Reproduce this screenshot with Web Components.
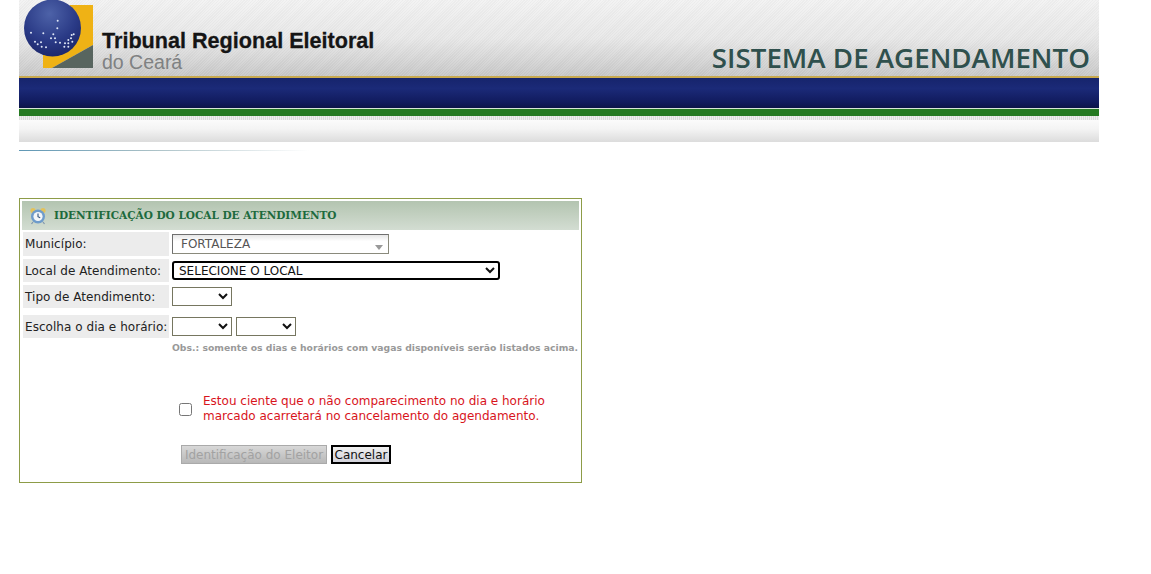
<!DOCTYPE html>
<html lang="pt-BR">
<head>
<meta charset="utf-8">
<title>Sistema de Agendamento</title>
<style>
  html, body { background: #fff; }
  body {
    margin: 0;
    padding-left: 19px;
    font-family: "DejaVu Sans", Verdana, sans-serif;
  }
  tre-header { margin-bottom: 47px; }
  select {
    box-sizing: border-box;
    height: 19px;
    margin: 0;
    padding: 0;
    font: 12px "DejaVu Sans", sans-serif;
    color: #111;
    background: #fff;
    border: 1px solid #767660;
    border-radius: 0;
  }
  select.small { width: 60px; }
  select.focus {
    width: 328px;
    height: 19px;
    padding-left: 1px;
    border: 2px solid #000;
    border-radius: 3px;
  }
  .obs {
    margin: 4px 0 0 149px;
    font: bold 9.25px "DejaVu Sans", sans-serif;
    color: #999;
    white-space: nowrap;
  }
  .actions { display: flex; gap: 4px; margin: 21px 0 0 158px; }
  button {
    box-sizing: border-box;
    height: 19px;
    padding: 0 1px;
    font: 12px "DejaVu Sans", sans-serif;
    white-space: nowrap;
  }
  button[disabled] {
    width: 146px;
    color: #a2a2a2;
    border: 1px solid #aaa;
    background: linear-gradient(#d8d8d8 0, #b8b8b8 100%);
  }
  button.cancel {
    width: 60px;
    color: #111;
    border: 2px solid #000;
    background: linear-gradient(#f0f0f0 0, #d2d2da 100%);
  }
</style>
</head>
<body>
<tre-header></tre-header>
<local-panel heading="IDENTIFICAÇÃO DO LOCAL DE ATENDIMENTO">
  <form-row label="Município:" height="24" gap="3">
    <fake-select value="FORTALEZA"></fake-select>
  </form-row>
  <form-row label="Local de Atendimento:" height="23" gap="3">
    <select class="focus">
      <option>SELECIONE O LOCAL</option>
    </select>
  </form-row>
  <form-row label="Tipo de Atendimento:" height="23" gap="7">
    <select class="small"><option></option></select>
  </form-row>
  <form-row label="Escolha o dia e horário:" height="23" gap="0">
    <select class="small"><option></option></select>
    <select class="small"><option></option></select>
  </form-row>
  <p class="obs">Obs.: somente os dias e horários com vagas disponíveis serão listados acima.</p>
  <agree-box>Estou ciente que o não comparecimento no dia e horário<br>marcado acarretará no cancelamento do agendamento.</agree-box>
  <div class="actions">
    <button disabled>Identificação do Eleitor</button>
    <button class="cancel">Cancelar</button>
  </div>
</local-panel>

<script>
class TreHeader extends HTMLElement {
  constructor() {
    super();
    this.attachShadow({ mode: "open" });
  }

  connectedCallback() {
    const stars = [[128,62],[127,85],[48,98],[85,100],[115,103],[108,115],[120,115],[122,127],[60,125],[78,127],[93,142],[68,133],[80,140],[150,130],[160,130],[170,105],[176,103],[168,115],[160,120],[148,140],[160,140],[172,125],[135,128]];
    const dots = stars
      .map(([x, y]) => `<circle cx="${(15 + x / 3).toFixed(1)}" cy="${(y / 3).toFixed(1)}" r="1" fill="#dfe6f7"/>`)
      .join("");
    this.shadowRoot.innerHTML = `
      <style>
        :host { display: block; width: 1080px; }
        .top {
          height: 76px;
          display: flex;
          background:
            repeating-linear-gradient(135deg, rgba(255,255,255,.07) 0 1px, rgba(110,110,110,.04) 1px 2px),
            linear-gradient(#f2f2f2 0, #e8e8e8 50%, #c8c8c8 100%);
        }
        svg { width: 80px; height: 76px; flex: none; }
        .org {
          margin-left: 3px;
          padding-top: 29px;
          font-family: "Liberation Sans", Arial, sans-serif;
        }
        .org b {
          display: block;
          font-size: 21.6px;
          line-height: 24px;
          color: #151515;
          -webkit-text-stroke: .3px #151515;
        }
        .org span {
          display: block;
          font-size: 19.5px;
          line-height: 18px;
          color: #7f8182;
        }
        h1 {
          margin: 39px 9px 0 auto;
          font: 600 27.7px/36px "Open Sans", sans-serif;
          color: #2f504d;
          white-space: nowrap;
        }
        .gold { height: 2px; background: #c8a94f; }
        .blue { height: 30px; background: linear-gradient(#16246c 0, #1b2a78 35%, #111b5e 80%, #0c1448 100%); }
        .sep { height: 1px; background: #d8e4d8; }
        .green { height: 7px; background: #267a22; }
        .hatch {
          height: 4px;
          background: repeating-linear-gradient(90deg, #dcdcdc 0 1px, #efefef 1px 2px);
        }
        .light { height: 22px; background: linear-gradient(#fbfbfb 0, #f4f4f4 40%, #dcdcdc 100%); }
        .rule {
          width: 290px;
          height: 1px;
          margin-top: 8px;
          background: linear-gradient(90deg, #5f97b5 0, #a9c0c6 45%, #fff 100%);
        }
      </style>
      <div class="top">
        <svg viewBox="19 0 80 76" aria-hidden="true">
          <defs>
            <radialGradient id="globe" cx="45%" cy="25%" r="80%">
              <stop offset="0" stop-color="#4d62a8"/>
              <stop offset=".6" stop-color="#2a3a86"/>
              <stop offset="1" stop-color="#1b2568"/>
            </radialGradient>
          </defs>
          <polygon points="70,5 93,5 93,45 52,68 43,68 43,55" fill="#efb215"/>
          <polygon points="93,45 93,68 52,68" fill="#58655f"/>
          <circle cx="52.5" cy="28" r="28.5" fill="url(#globe)"/>
          ${dots}
        </svg>
        <div class="org"><b>Tribunal Regional Eleitoral</b><span>do Ceará</span></div>
        <h1>SISTEMA DE AGENDAMENTO</h1>
      </div>
      <div class="gold"></div>
      <div class="blue"></div>
      <div class="sep"></div>
      <div class="green"></div>
      <div class="hatch"></div>
      <div class="light"></div>
      <div class="rule"></div>
    `;
  }
}

class LocalPanel extends HTMLElement {
  constructor() {
    super();
    this.attachShadow({ mode: "open" });
  }

  connectedCallback() {
    this.shadowRoot.innerHTML = `
      <style>
        :host {
          display: block;
          box-sizing: border-box;
          width: 563px;
          height: 285px;
          padding: 2px;
          border: 1px solid #8d9c48;
          font-size: 12px;
        }
        header {
          height: 29px;
          display: flex;
          align-items: center;
          gap: 7px;
          padding-left: 7px;
          background: linear-gradient(#b3c4b0 0, #d3ddd2 100%);
          font: bold 10.5px "DejaVu Serif", serif;
          color: #1d6a3d;
        }
        header span { margin-top: -2px; }
        svg { width: 18px; height: 18px; flex: none; }
        .body { padding: 2px 0 0 1px; }
      </style>
      <header>
        <svg viewBox="0 0 18 18" aria-hidden="true">
          <circle cx="4" cy="3.5" r="2.6" fill="#e4c25a"/>
          <circle cx="14" cy="3.5" r="2.6" fill="#e4c25a"/>
          <path d="M4 15l-1.5 2M14 15l1.5 2" stroke="#7d94ad" stroke-width="1.2"/>
          <circle cx="9" cy="9.5" r="7" fill="#6f9ccb"/>
          <circle cx="9" cy="9.5" r="4.6" fill="#f4f6f8"/>
          <path d="M9 6.5v3.2l2.2 1" fill="none" stroke="#33557d" stroke-width="1.1"/>
        </svg>
        <span>${this.getAttribute("heading")}</span>
      </header>
      <div class="body"><slot></slot></div>
    `;
  }
}

class FormRow extends HTMLElement {
  constructor() {
    super();
    this.attachShadow({ mode: "open" });
  }

  connectedCallback() {
    const h = this.getAttribute("height");
    const gap = this.getAttribute("gap");
    this.shadowRoot.innerHTML = `
      <style>
        :host {
          display: flex;
          align-items: center;
          gap: 3px;
          height: ${h}px;
          margin-bottom: ${gap}px;
          color: #222;
        }
        label {
          box-sizing: border-box;
          flex: none;
          width: 146px;
          height: 100%;
          padding-left: 2px;
          display: flex;
          align-items: center;
          background: #ececec;
          white-space: nowrap;
          letter-spacing: .05px;
        }
        .fields { display: flex; align-items: center; gap: 4px; }
      </style>
      <label>${this.getAttribute("label")}</label>
      <div class="fields"><slot></slot></div>
    `;
  }
}

class FakeSelect extends HTMLElement {
  constructor() {
    super();
    this.attachShadow({ mode: "open" });
  }

  connectedCallback() {
    this.shadowRoot.innerHTML = `
      <style>
        :host {
          box-sizing: border-box;
          display: flex;
          align-items: center;
          justify-content: space-between;
          width: 217px;
          height: 20px;
          padding: 0 5px 0 8px;
          border: 1px solid #8a8a7c;
          border-top-color: #6f6f6f;
          border-left-color: #6f6f6f;
          background: linear-gradient(#e6e6e6 0, #fff 35%);
          color: #555;
          font-size: 12px;
        }
        i {
          width: 0;
          height: 0;
          margin-top: 7px;
          border: 4px solid transparent;
          border-top: 5px solid #999;
          border-bottom: 0;
        }
        span { margin-top: -1px; }
      </style>
      <span>${this.getAttribute("value")}</span><i></i>
    `;
  }
}

class AgreeBox extends HTMLElement {
  constructor() {
    super();
    this.attachShadow({ mode: "open" });
  }

  connectedCallback() {
    this.shadowRoot.innerHTML = `
      <style>
        :host {
          display: flex;
          align-items: center;
          gap: 11px;
          margin: 41px 0 0 156px;
          color: #d8141c;
          font-size: 12px;
          line-height: 15px;
        }
        input { width: 13px; height: 13px; margin: 0; flex: none; }
      </style>
      <input type="checkbox">
      <div><slot></slot></div>
    `;
  }
}

customElements.define("tre-header", TreHeader);
customElements.define("local-panel", LocalPanel);
customElements.define("form-row", FormRow);
customElements.define("fake-select", FakeSelect);
customElements.define("agree-box", AgreeBox);
</script>
</body>
</html>
